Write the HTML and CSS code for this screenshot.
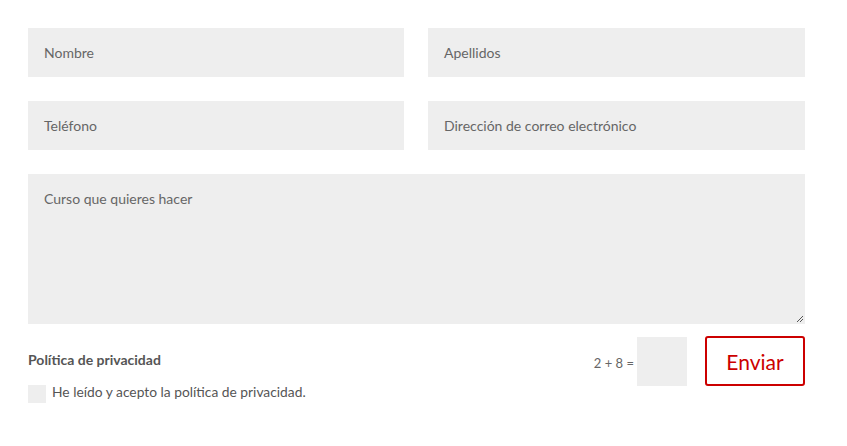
FILE: index.html
```html
<!DOCTYPE html>
<html lang="es">
<head>
<meta charset="utf-8">
<title>Formulario</title>
<link rel="stylesheet" href="styles.css">
</head>
<body>
<form class="form">
  <div class="grid">
    <div class="field">Nombre</div>
    <div class="field">Apellidos</div>
    <div class="field">Teléfono</div>
    <div class="field">Dirección de correo electrónico</div>
    <div class="field area">
      Curso que quieres hacer
      <svg class="grip" width="8" height="8" viewBox="0 0 8 8"><path d="M7 1 L1 7 M7 4 L4 7 M7 7 L7 7" stroke="#555" stroke-width="1" fill="none"/></svg>
    </div>
  </div>
  <div class="bottom">
    <div class="privacy">
      <div class="ptitle">Política de privacidad</div>
      <label class="check"><span class="box"></span>He leído y acepto la política de privacidad.</label>
    </div>
    <div class="submit">
      <span class="captcha">2 + 8 =</span>
      <span class="cbox"></span>
      <button type="button" class="btn">Enviar</button>
    </div>
  </div>
</form>
</body>
</html>
```
FILE: styles.css
```css
html, body { margin: 0; padding: 0; background: #fff; }
body { font-family: Lato, "Open Sans", sans-serif; }
.form { padding: 28px 42px 0 28px; width: 777px; }
.grid { display: grid; grid-template-columns: 376px 377px; column-gap: 24px; row-gap: 24px; }
.field { background: #eee; height: 49px; box-sizing: border-box; padding: 0 16px; display: flex; align-items: center; font-size: 14px; color: #666; }
.area { grid-column: 1 / 3; height: 150px; align-items: flex-start; padding-top: 16px; position: relative; }
.grip { position: absolute; right: 1px; bottom: 1px; }
.bottom { display: flex; justify-content: space-between; align-items: flex-start; margin-top: 12px; }
.privacy { padding-top: 16px; }
.ptitle { font-size: 14px; font-weight: bold; color: #555; line-height: 16px; }
.check { display: flex; align-items: flex-start; margin-top: 15px; font-size: 13.8px; color: #555; line-height: 18px; }
.box { width: 18px; height: 18px; background: #eee; margin-right: 6px; margin-top: 2px; }
.submit { display: flex; align-items: center; }
.captcha { font-size: 13px; color: #666; margin-right: 3px; padding-top: 4px; }
.cbox { width: 50px; height: 49px; background: #eee; }
.btn { margin-left: 18px; width: 100px; height: 50px; border: 2px solid #cc0000; border-radius: 3px; background: #fff; color: #cc0000; font-family: Lato, sans-serif; font-size: 21px; padding: 0; }
```
